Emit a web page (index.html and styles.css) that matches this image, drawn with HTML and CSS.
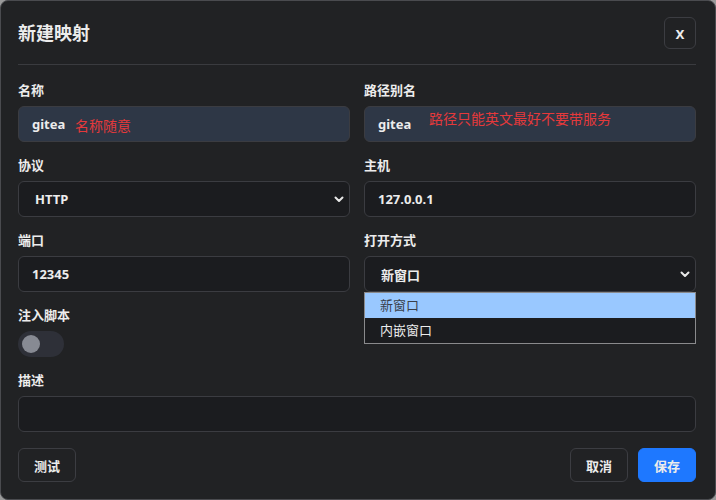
FILE: index.html
```html
<!DOCTYPE html>
<html>
    <head>
        <meta http-equiv="Content-Type" content="text/html; charset=utf-8;" />
        <title>新建映射</title>
        <link rel="stylesheet" href="styles.css">
    </head>

    <body>
        <div class="m-dialog">
            <div class="hd">
                <h2>新建映射</h2>
                <span class="close">x</span>
            </div>
            <div class="bd">
                <div class="field">
                    <label>名称</label>
                    <div class="ipt ipt-fill">gitea<span class="tip">名称随意</span></div>
                </div>
                <div class="field">
                    <label>路径别名</label>
                    <div class="ipt ipt-fill">gitea<span class="tip tip-up">路径只能英文最好不要带服务</span></div>
                </div>
                <div class="field">
                    <label>协议</label>
                    <div class="ipt sel">
                        <span>HTTP</span>
                        <svg width="10" height="7" viewBox="0 0 10 7"><path d="M1.5 1.5 5 5l3.5-3.5" fill="none" stroke="#e8e8e8" stroke-width="2" stroke-linecap="round" stroke-linejoin="round"/></svg>
                    </div>
                </div>
                <div class="field">
                    <label>主机</label>
                    <div class="ipt">127.0.0.1</div>
                </div>
                <div class="field">
                    <label>端口</label>
                    <div class="ipt">12345</div>
                </div>
                <div class="field">
                    <label>打开方式</label>
                    <div class="ipt sel">
                        <span>新窗口</span>
                        <svg width="10" height="7" viewBox="0 0 10 7"><path d="M1.5 1.5 5 5l3.5-3.5" fill="none" stroke="#e8e8e8" stroke-width="2" stroke-linecap="round" stroke-linejoin="round"/></svg>
                    </div>
                    <!-- 展開中的下拉選項 -->
                    <ul class="drop">
                        <li class="curr">新窗口</li>
                        <li>内嵌窗口</li>
                    </ul>
                </div>
                <div class="field">
                    <label>注入脚本</label>
                    <span class="switch"><i></i></span>
                </div>
                <div class="field full">
                    <label>描述</label>
                    <div class="ipt"></div>
                </div>
            </div>
            <div class="ft">
                <span class="btn">测试</span>
                <span class="sp"></span>
                <span class="btn">取消</span>
                <span class="btn btn-pri">保存</span>
            </div>
        </div>
    </body>
</html>
```

FILE: styles.css
```css
* {
    margin: 0;
    padding: 0;
    box-sizing: border-box;
}
li {
    list-style: none;
}
body {
    background: #9a9a9a;
    font-family: "Noto Sans", "Noto Sans CJK SC", sans-serif;
    color: #ececec;
}

.m-dialog {
    height: 500px;
    padding: 0 19px 18px 17px;
    background: #212224;
    border: 1px solid #4a4b4f;
    border-radius: 8px;
}
.m-dialog .hd {
    display: flex;
    align-items: center;
    justify-content: space-between;
    padding: 16px 0 15px;
    border-bottom: 1px solid #3a3b3f;
}
.m-dialog .hd h2 {
    font-size: 18px;
    font-weight: 700;
    line-height: 32px;
}
.m-dialog .close {
    display: flex;
    align-items: center;
    justify-content: center;
    width: 32px;
    height: 32px;
    border: 1px solid #3c3d42;
    border-radius: 6px;
    font-size: 16px;
    font-weight: 600;
}

.m-dialog .bd {
    display: grid;
    grid-template-columns: 1fr 1fr;
    column-gap: 14px;
    row-gap: 15px;
    padding-top: 17px;
}
.m-dialog .field {
    position: relative;
}
.m-dialog .full {
    grid-column: 1 / 3;
}
.m-dialog label {
    display: block;
    margin-bottom: 8px;
    font-size: 13px;
    font-weight: 700;
    line-height: 16px;
}
.m-dialog .ipt {
    display: flex;
    align-items: center;
    height: 36px;
    padding: 0 13px;
    background: #1b1c1f;
    border: 1px solid #3b3c41;
    border-radius: 6px;
    font-size: 13px;
    font-weight: 700;
}
.m-dialog .ipt-fill {
    background: #2e3746;
}
.m-dialog .tip {
    position: absolute;
    left: 57px;
    top: 33px;
    color: #e5393b;
    font-size: 14px;
    font-weight: 400;
}
.m-dialog .tip-up {
    left: 65px;
    top: 26px;
}
.m-dialog .sel {
    justify-content: space-between;
    padding: 0 5px 0 16px;
}
.m-dialog .drop {
    position: absolute;
    left: 0;
    right: 0;
    top: 60px;
    background: #1b1c1f;
    border: 1px solid #8a8a8c;
    font-size: 13px;
    z-index: 2;
}
.m-dialog .drop li {
    height: 25px;
    line-height: 25px;
    padding-left: 15px;
}
.m-dialog .drop .curr {
    background: #99c8ff;
    color: #3a3f4a;
}
.m-dialog .switch {
    display: block;
    width: 46px;
    height: 26px;
    padding: 4px;
    background: #2e3038;
    border-radius: 13px;
}
.m-dialog .switch i {
    display: block;
    width: 18px;
    height: 18px;
    background: #878a93;
    border-radius: 50%;
}

.m-dialog .ft {
    display: flex;
    gap: 10px;
    margin-top: 16px;
}
.m-dialog .ft .sp {
    flex: 1;
}
.m-dialog .btn {
    display: flex;
    align-items: center;
    justify-content: center;
    width: 58px;
    height: 34px;
    border: 1px solid #3c3d42;
    border-radius: 6px;
    font-size: 13px;
    font-weight: 700;
}
.m-dialog .btn-pri {
    background: #1e78ff;
    border-color: #1e78ff;
}
```
